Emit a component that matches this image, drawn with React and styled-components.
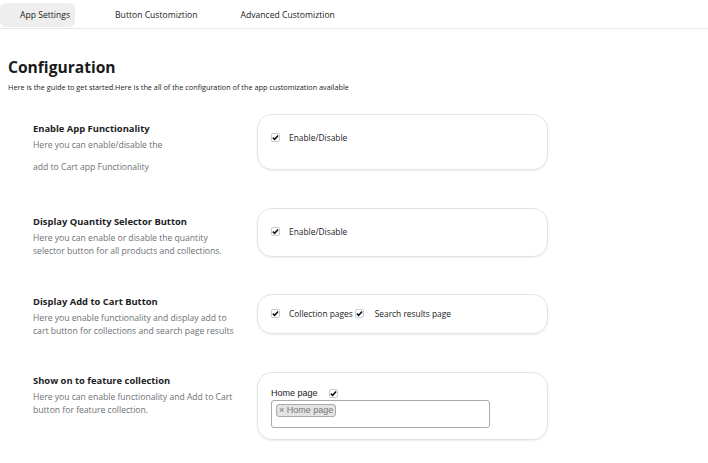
import React from 'react';
import styled, { createGlobalStyle } from 'styled-components';

const GlobalStyle = createGlobalStyle`
  body {
    margin: 0;
    background: #fff;
    font-family: 'Open Sans', 'Noto Sans', sans-serif;
    color: #202223;
  }
`;

const Page = styled.div`
  width: 708px;
  min-height: 463px;
`;

const Tabs = styled.div`
  display: flex;
  align-items: center;
  height: 29px;
  border-bottom: 1px solid #e8e8e8;
  box-sizing: border-box;
`;

const Tab = styled.div`
  height: 24px;
  margin-top: 2px;
  display: flex;
  align-items: center;
  padding: ${p => p.$pad};
  font-size: 8.6px;
  color: #202223;
  border-radius: 6px;
  background: ${p => (p.$active ? '#eeeeee' : 'transparent')};
`;

const Intro = styled.div`
  padding: 27px 8px 0;
`;

const Heading = styled.h1`
  margin: 0;
  font-size: 15.6px;
  font-weight: 700;
  line-height: 22px;
  color: #1a1a1a;
`;

const Lead = styled.p`
  margin: 4px 0 0;
  font-size: 7.3px;
  line-height: 10px;
  color: #202223;
`;

const Rows = styled.div`
  display: flex;
  flex-direction: column;
  padding: 22px 0 0 33px;
`;

const Row = styled.div`
  display: flex;
  align-items: flex-start;
  height: ${p => (p.$h ? `${p.$h}px` : 'auto')};
`;

const Info = styled.div`
  width: 224px;
  padding-top: ${p => p.$top}px;
  box-sizing: border-box;
`;

const Title = styled.div`
  font-size: 9.4px;
  font-weight: 700;
  line-height: 12px;
  color: #202223;
`;

const Desc = styled.p`
  margin: ${p => p.$gap || 4}px 0 0;
  font-size: 8.6px;
  line-height: 13px;
  color: #6d7175;
  width: 202px;
`;

const Card = styled.div`
  width: 291px;
  height: ${p => p.$h}px;
  box-sizing: border-box;
  border: 1px solid #e3e3e3;
  border-radius: 15px;
  box-shadow: 0 1px 2px rgba(0, 0, 0, 0.08);
  padding: ${p => p.$top}px 13px 0;
`;

const Options = styled.div`
  display: flex;
  align-items: center;
  font-size: 8.4px;
  color: #202223;
`;

const Box = styled.span`
  width: 9px;
  height: 9px;
  box-sizing: border-box;
  border: 1px solid #c9cccf;
  border-radius: 2px;
  background: #fff;
  display: inline-flex;
  align-items: center;
  justify-content: center;
  margin: 0 ${p => p.$mr}px 0 ${p => p.$ml}px;
  flex-shrink: 0;
`;

const Check = ({ mr = 9, ml = 0 }) => (
  <Box $mr={mr} $ml={ml}>
    <svg width="8" height="7" viewBox="0 0 8 7">
      <path d="M1 3.6 L3 5.6 L7 1.2" fill="none" stroke="#111" strokeWidth="1.8" />
    </svg>
  </Box>
);

const SelectLabel = styled.div`
  display: flex;
  align-items: center;
  font-family: 'Liberation Sans', Arial, sans-serif;
  font-size: 9px;
  line-height: 11px;
  color: #222;
  gap: 11px;
`;

const Select = styled.div`
  display: flex;
  align-items: flex-start;
  width: 219px;
  height: 28px;
  margin-top: 1px;
  box-sizing: border-box;
  border: 1px solid #aaa;
  border-radius: 3px;
  padding: 3px 4px;
`;

const Tag = styled.span`
  font-family: 'Liberation Sans', Arial, sans-serif;
  font-size: 9px;
  line-height: 11px;
  color: #777;
  background: #e4e4e4;
  border: 1px solid #aaa;
  border-radius: 3px;
  padding: 0 2px;
`;

export default function App() {
  return (
    <Page>
      <GlobalStyle />
      <Tabs>
        <Tab $active $pad="0 5px 0 20px">App Settings</Tab>
        <Tab $pad="0 0 0 40px">Button Customiztion</Tab>
        <Tab $pad="0 0 0 43px">Advanced Customiztion</Tab>
      </Tabs>
      <Intro>
        <Heading>Configuration</Heading>
        <Lead>
          Here is the guide to get started.Here is the all of the configuration of the app customization available
        </Lead>
      </Intro>
      <Rows>
        <Row $h={94}>
          <Info $top={9}>
            <Title>Enable App Functionality</Title>
            <Desc>Here you can enable/disable the</Desc>
            <Desc $gap={9}>add to Cart app Functionality</Desc>
          </Info>
          <Card $h={56} $top={17}>
            <Options>
              <Check />
              Enable/Disable
            </Options>
          </Card>
        </Row>
        <Row $h={86}>
          <Info $top={8}>
            <Title>Display Quantity Selector Button</Title>
            <Desc>Here you can enable or disable the quantity selector button for all products and collections.</Desc>
          </Info>
          <Card $h={49} $top={17}>
            <Options>
              <Check />
              Enable/Disable
            </Options>
          </Card>
        </Row>
        <Row $h={78}>
          <Info $top={2}>
            <Title>Display Add to Cart Button</Title>
            <Desc>Here you enable functionality and display add to cart button for collections and search page results</Desc>
          </Info>
          <Card $h={40} $top={13}>
            <Options>
              <Check />
              Collection pages
              <Check ml={2} mr={11} />
              Search results page
            </Options>
          </Card>
        </Row>
        <Row>
          <Info $top={3}>
            <Title>Show on to feature collection</Title>
            <Desc>Here you can enable functionality and Add to Cart button for feature collection.</Desc>
          </Info>
          <Card $h={68} $top={15}>
            <SelectLabel>
              Home page
              <Check mr={0} />
            </SelectLabel>
            <Select>
              <Tag>× Home page</Tag>
            </Select>
          </Card>
        </Row>
      </Rows>
    </Page>
  );
}
